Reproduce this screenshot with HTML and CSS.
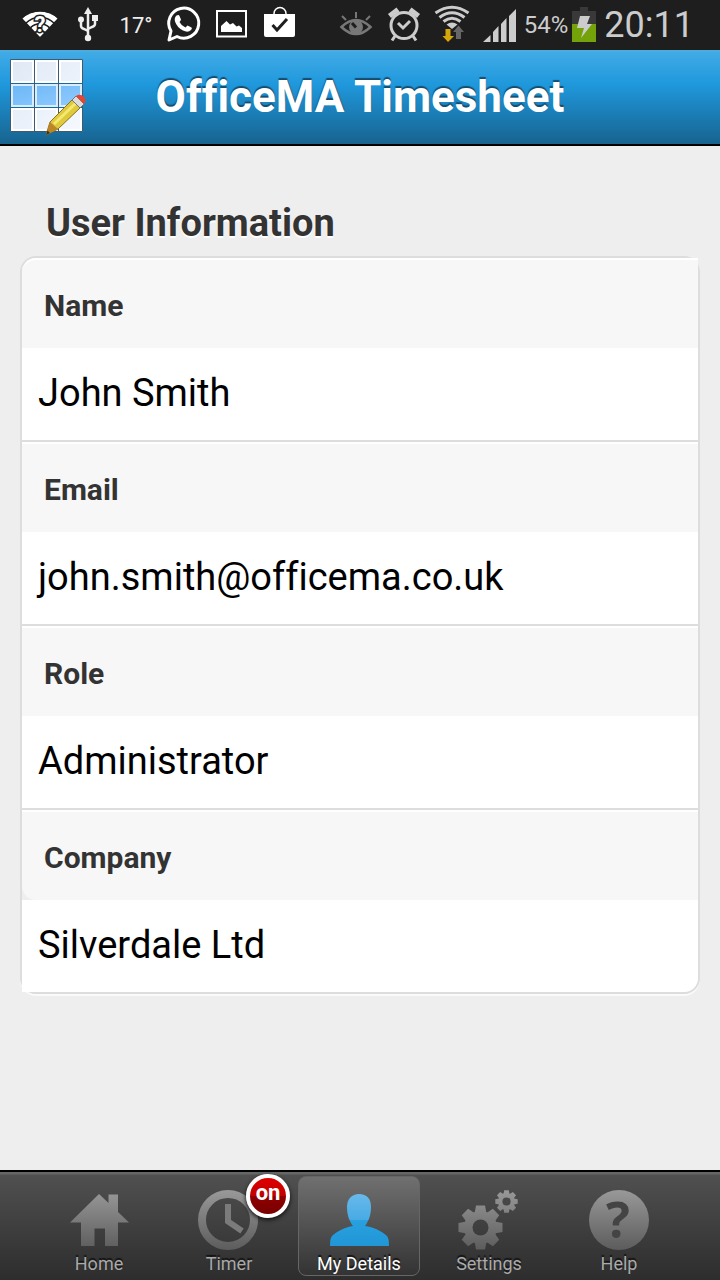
FILE: index.html
```html
<!DOCTYPE html>
<html lang="en">
<head>
    <meta charset="UTF-8">
    <meta name="viewport" content="width=device-width, initial-scale=1.0">
    <title>OfficeMA Timesheet</title>
    <link rel="stylesheet" href="styles.css">
</head>
<body>
    <div class="status-bar">
        <div class="status-group">
            <svg class="status-icon" viewBox="0 0 48 50">
                <clipPath id="fan"><path d="M24 37L6 18Q24 5 42 18Z"/></clipPath>
                <g clip-path="url(#fan)" fill="none" stroke="#fff" stroke-width="5">
                    <circle cx="24" cy="37" r="23"/>
                    <circle cx="24" cy="37" r="16.5"/>
                    <circle cx="24" cy="37" r="10"/>
                    <circle cx="24" cy="37" r="3"/>
                </g>
                <text x="24" y="32" class="wifi-mark">?</text>
            </svg>
            <svg class="status-icon" viewBox="0 0 48 50" fill="none" stroke="#eee" stroke-width="2.5">
                <path d="M24 12V37M17 20V26Q17 28 20 29L24 31M31 18V24Q31 26 28 27L24 29"/>
                <g fill="#eee" stroke="none">
                    <path d="M24 7L28 14H20Z"/>
                    <circle cx="24" cy="38" r="3.2"/>
                    <circle cx="17" cy="19.5" r="3"/>
                    <path d="M28 15H34V21H28Z"/>
                </g>
            </svg>
            <span class="temperature">17°</span>
            <svg class="status-icon" viewBox="0 0 48 50">
                <path d="M9 40L11 31A15 15 0 1 1 17 36.500Z" fill="none" stroke="#fff" stroke-width="3" stroke-linejoin="round"/>
                <path d="M16.500 15.500Q19 14.500 19.500 16L21 19.500Q20.500 21 19.500 22Q21.500 26 25.500 27.500L27.500 25.500L31.500 27.500Q32.500 28.500 31 30Q28 33 23 30.500Q17 27.500 15 21.500Q14 17.500 16.500 15.500Z" fill="#fff"/>
            </svg>
            <svg class="status-icon" viewBox="0 0 48 50">
                <path d="M9 11H38V36.500H9Z" fill="none" stroke="#fff" stroke-width="2"/>
                <path d="M13 32V26L18.500 21L22 24.500L25 23L28.500 26.500L31 25.500L34 28V32Z" fill="#fff"/>
            </svg>
            <svg class="status-icon" viewBox="0 0 48 50">
                <path d="M18 16V13.500A6 6 0 0 1 30 13.500V16" fill="none" stroke="#fff" stroke-width="1.500"/>
                <path d="M8 14H39V35Q39 37 37 37H10Q8 37 8 35Z" fill="#fff"/>
                <path d="M16.500 25L21 30L31 19" fill="none" stroke="#1e1e1e" stroke-width="3"/>
            </svg>
        </div>
        <div class="status-group">
            <svg class="status-icon" viewBox="0 0 48 50">
                <path d="M9.500 27Q24 13 38.500 27Q24 41 9.500 27Z" fill="none" stroke="#777" stroke-width="2.500"/>
                <circle cx="24" cy="27" r="7" fill="#777"/>
                <path d="M20 23L24 27.500" stroke="#1e1e1e" stroke-width="3"/>
                <path d="M10 16L14 20M24 12V18M38 16L34 20" stroke="#777" stroke-width="2"/>
            </svg>
            <svg class="status-icon" viewBox="0 0 48 50" fill="none" stroke="#ccc">
                <circle cx="24" cy="25.500" r="13" stroke-width="3"/>
                <path d="M18 23L23 28L30 21M15 36L12 40.500M33 36L36 40.500" stroke-width="3"/>
                <path d="M9.500 16L18 9.500M30 9.500L38.500 16" stroke-width="5"/>
            </svg>
            <svg class="status-icon" viewBox="0 0 48 50">
                <g fill="none" stroke="#ccc" stroke-width="3">
                    <path d="M7.500 13Q24 1.500 40.500 13M11.500 17.500Q24 8 36.500 17.500M15.500 21.500Q24 15 32.500 21.500"/>
                </g>
                <path d="M18.500 24.500Q24 20.500 29.500 24.500L24 29Z" fill="#ccc"/>
                <path d="M17.500 29H22.500V36H26L20 42L14.500 36H17.500Z" fill="#d6a70a"/>
                <path d="M28 39H33V32H36L30.500 25.500L25 32H28Z" fill="#666"/>
            </svg>
            <svg class="status-icon" viewBox="0 0 48 50" fill="#ccc">
                <path d="M7 42L14.500 35V42ZM17 42V32L22.500 26V42ZM25 42V24L30.500 18V42ZM33 42V16L40 9V42Z"/>
            </svg>
            <span class="battery-level">54%</span>
            <svg class="battery-icon" viewBox="0 0 24 50">
                <path d="M8 7H16V11H24V42H0V11H8Z" fill="#393939"/>
                <path d="M0 24H24V42H0Z" fill="#73a309"/>
                <path d="M8 16H18L15 24H20L9 38L12 28H5Z" fill="#ccc"/>
            </svg>
            <span class="clock">20:11</span>
        </div>
    </div>

    <header class="header">
        <svg class="app-logo" viewBox="0 0 78 78">
            <defs>
                <linearGradient id="cell" x1="0" y1="0" x2="1" y2="1">
                    <stop offset="0" stop-color="#dfe9f5"/>
                    <stop offset="1" stop-color="#f5f8ff"/>
                </linearGradient>
                <linearGradient id="cellBlue" x1="0" y1="0" x2="1" y2="1">
                    <stop offset="0" stop-color="#6db8f6"/>
                    <stop offset="1" stop-color="#90caff"/>
                </linearGradient>
            </defs>
            <path d="M1.500 0.500H73.500V72.500H1.500Z" fill="#fff" stroke="#405a70"/>
            <path d="M2 25H73V49H2Z" fill="#d8edff"/>
            <g fill="url(#cell)">
                <path d="M4 3H23V22H4ZM28 3H47V22H28ZM52 3H71V22H52ZM4 51H23V70H4ZM28 51H47V70H28ZM52 51H71V70H52Z"/>
            </g>
            <path d="M4 27H23V46H4ZM28 27H47V46H28ZM52 27H71V46H52Z" fill="url(#cellBlue)"/>
            <path d="M25.500 1V72M49.500 1V72" stroke="#405a70"/>
            <path d="M1 24.500H74M1 48.500H74" stroke="#1a699e"/>
            <path d="M37 76L41 63L63 41L71 49L49 70Z" fill="#dfca3c" stroke="#8b7419"/>
            <path d="M45 65L67 44" stroke="#f4e872" stroke-width="3"/>
            <path d="M41 63L49 70L37 76Z" fill="#bd8428"/>
            <path d="M37 76L38.500 71.500L41 74Z" fill="#333"/>
            <path d="M63 41L67 37L75 45L71 49Z" fill="#ddd" stroke="#777"/>
            <path d="M67 37Q71 34 75 38Q78 42 75 45Z" fill="#e84430"/>
        </svg>
        <h1>OfficeMA Timesheet</h1>
    </header>

    <main class="content">
        <h2>User Information</h2>
        <dl class="details">
            <div class="detail">
                <dt>Name</dt>
                <dd>John Smith</dd>
            </div>
            <div class="detail">
                <dt>Email</dt>
                <dd>john.smith@officema.co.uk</dd>
            </div>
            <div class="detail">
                <dt>Role</dt>
                <dd>Administrator</dd>
            </div>
            <div class="detail">
                <dt>Company</dt>
                <dd>Silverdale Ltd</dd>
            </div>
        </dl>
    </main>

    <nav class="tab-bar">
        <a class="tab" href="#home">
            <svg class="tab-icon" viewBox="0 0 60 60">
                <defs>
                    <linearGradient id="grey" gradientUnits="userSpaceOnUse" x1="0" y1="0" x2="0" y2="60">
                        <stop offset="0" stop-color="#999"/>
                        <stop offset="1" stop-color="#5c5c5c"/>
                    </linearGradient>
                </defs>
                <path d="M30 4L39.500 13V4.500H49V22L60 32.500H49V56H36V38.500H25.500V56H12V32.500H1Z" fill="url(#grey)"/>
            </svg>
            <span>Home</span>
        </a>
        <a class="tab" href="#timer">
            <svg class="tab-icon" viewBox="0 0 60 60" fill="none" stroke="url(#grey)">
                <circle cx="29" cy="30" r="26" stroke-width="8"/>
                <path d="M29 14V31.500L43 41" stroke="#7b7b7b" stroke-width="6"/>
            </svg>
            <span>Timer</span>
            <span class="badge">on</span>
        </a>
        <a class="tab active" href="#details">
            <svg class="tab-icon" viewBox="0 0 60 60">
                <defs>
                    <linearGradient id="blue" x1="0" y1="0" x2="0" y2="1">
                        <stop offset="0" stop-color="#68baeb"/>
                        <stop offset="0.5" stop-color="#48aae4"/>
                        <stop offset="0.51" stop-color="#28a0e0"/>
                        <stop offset="1" stop-color="#2196d6"/>
                    </linearGradient>
                </defs>
                <path d="M30 4C38 4 42 9 42 17C42 26 39 32 36 36C44 37 53 41 58 46Q60 48 60 56H1Q1 48 3 46C8 41 17 37 24 36C21 32 18 26 18 17C18 9 23 4 30 4Z" fill="url(#blue)"/>
            </svg>
            <span>My Details</span>
        </a>
        <a class="tab" href="#settings">
            <svg class="tab-icon" viewBox="0 0 60 60">
                <defs>
                    <path id="tooth" d="M-6 -14L-4.500 -22H4.500L6 -14Z"/>
                    <g id="gear">
                        <circle r="16.500"/>
                        <use href="#tooth"/>
                        <use href="#tooth" transform="rotate(45)"/>
                        <use href="#tooth" transform="rotate(90)"/>
                        <use href="#tooth" transform="rotate(135)"/>
                        <use href="#tooth" transform="rotate(180)"/>
                        <use href="#tooth" transform="rotate(225)"/>
                        <use href="#tooth" transform="rotate(270)"/>
                        <use href="#tooth" transform="rotate(315)"/>
                        <circle r="8" fill="#000"/>
                    </g>
                    <mask id="gears" maskUnits="userSpaceOnUse" x="-2" y="0" width="62" height="60">
                        <use href="#gear" fill="#fff" transform="translate(21.500 37.500)"/>
                        <use href="#gear" fill="#fff" transform="translate(47.500 11.500) scale(0.51)"/>
                    </mask>
                </defs>
                <path d="M-2 0H60V60H-2Z" fill="url(#grey)" mask="url(#gears)"/>
            </svg>
            <span>Settings</span>
        </a>
        <a class="tab" href="#help">
            <svg class="tab-icon" viewBox="0 0 60 60">
                <circle cx="30" cy="30" r="30" fill="url(#grey)"/>
                <text x="29" y="48" class="help-mark">?</text>
            </svg>
            <span>Help</span>
        </a>
    </nav>
</body>
</html>
```
FILE: styles.css
```css
* {
    margin: 0;
    padding: 0;
    box-sizing: border-box;
}

body {
    font-family: Roboto, "Liberation Sans", sans-serif;
    font-variant-ligatures: none;
    background: #eee;
    min-height: 100vh;
    display: flex;
    flex-direction: column;
}

/* Status bar */
.status-bar {
    display: flex;
    justify-content: space-between;
    height: 50px;
    padding: 0 26px 0 16px;
    background: #1e1e1e;
    color: #ccc;
}

.status-group {
    display: flex;
    align-items: center;
}

.status-icon {
    width: 48px;
    height: 50px;
}

.wifi-mark {
    font-size: 22px;
    font-weight: 700;
    text-anchor: middle;
    fill: #fff;
    stroke: #1e1e1e;
    stroke-width: 3px;
    paint-order: stroke;
}

.temperature {
    width: 48px;
    text-align: center;
    font-size: 22px;
    color: #eee;
}

.battery-level {
    margin-right: 4px;
    font-size: 24px;
}

.battery-icon {
    width: 24px;
    height: 50px;
    margin-right: 8px;
}

.clock {
    font-size: 36px;
}

/* Header */
.header {
    display: flex;
    align-items: center;
    height: 96px;
    padding: 0 9px;
    border-top: 2px solid #4cabdf;
    border-bottom: 2px solid #000;
    background: linear-gradient(#41abe6, #1f98dc 35%, #17638f);
}

.app-logo {
    width: 78px;
    height: 78px;
}

h1 {
    flex: 1;
    padding: 0 78px 2px 0;
    text-align: center;
    font-size: 44px;
    font-weight: 700;
    color: #fff;
    text-shadow: 0 -2px 1px #134d70;
}

/* User details */
.content {
    flex: 1;
    padding: 53px 20px 20px;
}

h2 {
    padding-left: 26px;
    margin-bottom: 9px;
    font-size: 38px;
    line-height: 48px;
    font-weight: 700;
    color: #333;
    text-shadow: 0 2px 1px #fff;
}

.details {
    border: 2px solid #ddd;
    border-radius: 16px;
    box-shadow: 0 2px 0 #fafafa;
}

.detail + .detail {
    border-top: 2px solid #ddd;
}

dt {
    padding: 4px 22px 0;
    border-top: 2px solid #fff;
    background: #f7f7f7;
    font-size: 30px;
    line-height: 84px;
    font-weight: 700;
    color: #333;
}

dd {
    padding: 0 16px 2px;
    background: #fff;
    font-size: 38px;
    line-height: 90px;
    color: #000;
}

.detail:first-child dt {
    border-top-left-radius: 14px;
}

.detail:last-child dt {
    border-bottom-left-radius: 14px;
}

.detail:last-child dd {
    border-bottom-right-radius: 14px;
}

/* Bottom tabs */
.tab-bar {
    display: flex;
    justify-content: center;
    gap: 8px;
    height: 110px;
    padding: 2px 2px 2px 0;
    border-top: 2px solid #000;
    background: linear-gradient(#666 2px, #505050 3px, #2d2d2d);
}

.tab {
    position: relative;
    display: flex;
    flex-direction: column;
    align-items: center;
    width: 122px;
    height: 100px;
    margin-top: 2px;
    padding-top: 13px;
    border: 1px solid transparent;
    border-radius: 8px;
    font-size: 18px;
    line-height: 28px;
    color: #aaa;
    text-decoration: none;
    text-shadow: 0 -2px 1px #111;
}

.tab.active {
    border-color: #666;
    background: linear-gradient(#707070, #333);
    color: #fff;
}

.tab-icon {
    width: 60px;
    height: 60px;
    overflow: visible;
}

.help-mark {
    font-family: "Open Sans", sans-serif;
    font-size: 50px;
    font-weight: 700;
    text-anchor: middle;
    fill: #444;
    text-shadow: none;
}

.badge {
    position: absolute;
    top: -3px;
    right: -1px;
    width: 44px;
    height: 44px;
    border: 4px solid #fff;
    border-radius: 50%;
    background: linear-gradient(#e00000, #c00000 50%, #900000 51%, #780000);
    box-shadow: 0 2px 4px #111;
    font-size: 22px;
    line-height: 30px;
    font-weight: 700;
    text-align: center;
    color: #fff;
    text-shadow: none;
}
```
